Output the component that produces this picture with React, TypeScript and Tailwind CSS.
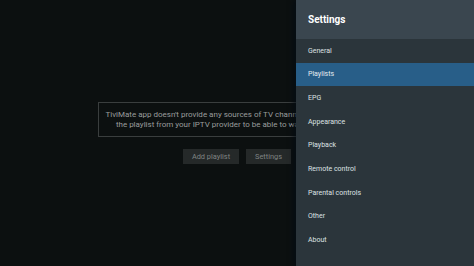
import React from "react";

const items = [
  "General",
  "Playlists",
  "EPG",
  "Appearance",
  "Playback",
  "Remote control",
  "Parental controls",
  "Other",
  "About",
];

export default function App() {
  return (
    <div
      className="flex w-[474px] h-[266px] overflow-hidden bg-[#0c1010]"
      style={{ fontFamily: "Roboto, 'Noto Sans', sans-serif" }}
    >
      <div className="h-full w-[296px] shrink-0 overflow-hidden">
        <div className="flex h-full w-[474px] flex-col items-center justify-center">
          <div className="flex h-[35px] w-[278px] flex-col items-center justify-center border border-[#3a3e3e] text-center text-[8px] leading-[10px] text-[#9a9d9d]">
            <span className="whitespace-nowrap">TiviMate app doesn't provide any sources of TV channels. You need to add</span>
            <span className="whitespace-nowrap">the playlist from your IPTV provider to be able to watch TV channels.</span>
          </div>
          <div className="mt-[12px] flex gap-[7px]">
            <div className="flex h-[15px] w-[56px] items-center justify-center bg-[#252929] text-[7.4px] text-[#7f8383]">
              Add playlist
            </div>
            <div className="flex h-[15px] w-[45px] items-center justify-center bg-[#252929] text-[7.4px] text-[#7f8383]">
              Settings
            </div>
          </div>
        </div>
      </div>
      <div className="relative flex h-full w-[178px] shrink-0 flex-col bg-[#2b353b] shadow-[-3px_0_5px_rgba(0,10,20,0.6)]">
        <div className="flex h-[39px] items-center bg-[#3a464f] pl-[12px] text-[10px] font-bold text-white">
          Settings
        </div>
        {items.map((it, i) => (
          <div
            key={it}
            className={
              i === 1
                ? "flex h-[23.7px] items-center bg-[#285e88] pl-[12px] text-[7px] text-[#e6ecf0]"
                : "flex h-[23.7px] items-center pl-[12px] text-[7px] text-[#dde2e4]"
            }
          >
            {it}
          </div>
        ))}
      </div>
    </div>
  );
}
